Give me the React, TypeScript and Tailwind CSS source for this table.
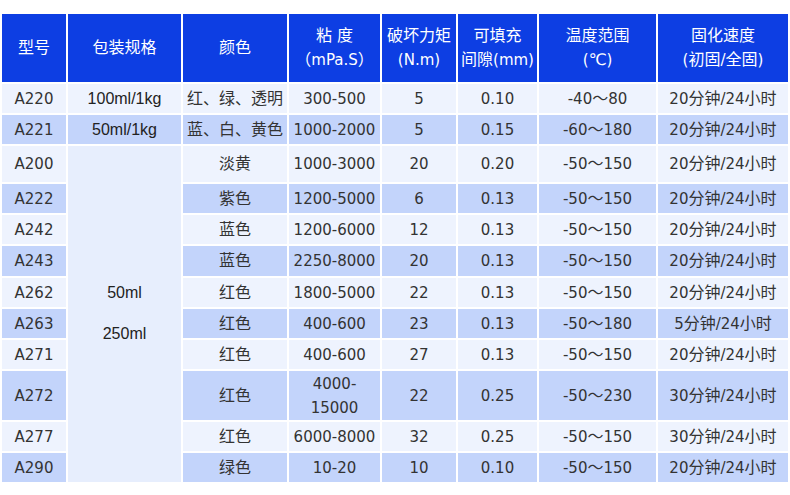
import { Fragment } from 'react';

// Han characters render a touch larger than the latin digits in the source table
const CJK = /([\u2000-\u206f\u2100-\u214f\u3000-\u9fff\uff00-\uffef]+)/;

const T = ({ text }: { text: string }) => (
  <>
    {text.split(CJK).map((part, i) =>
      i % 2 === 1 ? (
        <span key={i} className="text-[16px]">{part}</span>
      ) : (
        <Fragment key={i}>{part}</Fragment>
      )
    )}
  </>
);

type Row = {
  model: string;
  pack?: string;
  color: string;
  viscosity: string;
  torque: string;
  gap: string;
  temp: string;
  cure: string;
  h: string;
};

const rows: Row[] = [
  { model: 'A220', pack: '100ml/1kg', color: '红、绿、透明', viscosity: '300-500', torque: '5', gap: '0.10', temp: '-40～80', cure: '20分钟/24小时', h: 'h-[29px]' },
  { model: 'A221', pack: '50ml/1kg', color: '蓝、白、黄色', viscosity: '1000-2000', torque: '5', gap: '0.15', temp: '-60～180', cure: '20分钟/24小时', h: 'h-[29px]' },
  { model: 'A200', color: '淡黄', viscosity: '1000-3000', torque: '20', gap: '0.20', temp: '-50～150', cure: '20分钟/24小时', h: 'h-[36px]' },
  { model: 'A222', color: '紫色', viscosity: '1200-5000', torque: '6', gap: '0.13', temp: '-50～150', cure: '20分钟/24小时', h: 'h-[29px]' },
  { model: 'A242', color: '蓝色', viscosity: '1200-6000', torque: '12', gap: '0.13', temp: '-50～150', cure: '20分钟/24小时', h: 'h-[29px]' },
  { model: 'A243', color: '蓝色', viscosity: '2250-8000', torque: '20', gap: '0.13', temp: '-50～150', cure: '20分钟/24小时', h: 'h-[30px]' },
  { model: 'A262', color: '红色', viscosity: '1800-5000', torque: '22', gap: '0.13', temp: '-50～150', cure: '20分钟/24小时', h: 'h-[29px]' },
  { model: 'A263', color: '红色', viscosity: '400-600', torque: '23', gap: '0.13', temp: '-50～180', cure: '5分钟/24小时', h: 'h-[29px]' },
  { model: 'A271', color: '红色', viscosity: '400-600', torque: '27', gap: '0.13', temp: '-50～150', cure: '20分钟/24小时', h: 'h-[29px]' },
  { model: 'A272', color: '红色', viscosity: '4000-|15000', torque: '22', gap: '0.25', temp: '-50～230', cure: '30分钟/24小时', h: 'h-[49px]' },
  { model: 'A277', color: '红色', viscosity: '6000-8000', torque: '32', gap: '0.25', temp: '-50～150', cure: '30分钟/24小时', h: 'h-[29px]' },
  { model: 'A290', color: '绿色', viscosity: '10-20', torque: '10', gap: '0.10', temp: '-50～150', cure: '20分钟/24小时', h: 'h-[29px]' },
];

const headers = [
  ['型号'],
  ['包装规格'],
  ['颜色'],
  ['粘 度', '（mPa.S）'],
  ['破坏力矩', '(N.m)'],
  ['可填充', '间隙(mm)'],
  ['温度范围', '(℃)'],
  ['固化速度', '(初固/全固)'],
];

const widths = ['w-[64px]', 'w-[113px]', 'w-[104px]', 'w-[91px]', 'w-[74px]', 'w-[79px]', 'w-[117px]', 'w-[130px]'];

export default function App() {
  return (
    <div className="w-[790px] h-[495px] bg-white pt-[12px] font-['DejaVu_Sans','Noto_Sans_CJK_SC',sans-serif] text-[15px] leading-6 text-[#333]">
      <table className="table-fixed w-[790px] border-separate border-spacing-[2px]">
        <colgroup>
          {widths.map((w, i) => (
            <col key={i} className={w} />
          ))}
        </colgroup>
        <thead>
          <tr className="h-[68px]">
            {headers.map((lines, i) => (
              <th key={i} className="p-0 bg-[#0d3ee3] text-white font-normal text-center align-middle">
                {lines.map((l, j) => (
                  <div key={j} className="whitespace-nowrap">
                    <T text={l} />
                  </div>
                ))}
              </th>
            ))}
          </tr>
        </thead>
        <tbody>
          {rows.map((r, i) => {
            const bg = i % 2 === 0 ? 'bg-[#eef3fe]' : 'bg-[#c3d4fb]';
            const cell = `p-0 text-center align-middle whitespace-nowrap ${bg}`;
            return (
              <tr key={r.model} className={r.h}>
                <td className={cell}>{r.model}</td>
                {r.pack ? (
                  <td className={`${cell} font-['Liberation_Sans',sans-serif] text-[16px] text-[#222]`}>{r.pack}</td>
                ) : r.model === 'A200' ? (
                  <td
                    rowSpan={10}
                    className="p-0 text-center align-middle bg-[#e7eefd] font-['Liberation_Sans',sans-serif] text-[16px] leading-[20.5px] text-[#222]"
                  >
                    50ml
                    <br />
                    <br />
                    250ml
                  </td>
                ) : null}
                <td className={cell}>
                  <T text={r.color} />
                </td>
                <td className={cell}>
                  {r.viscosity.split('|').map((v, j) => (
                    <div key={j}>{v}</div>
                  ))}
                </td>
                <td className={cell}>{r.torque}</td>
                <td className={cell}>{r.gap}</td>
                <td className={cell}>
                  <T text={r.temp} />
                </td>
                <td className={cell}>
                  <T text={r.cure} />
                </td>
              </tr>
            );
          })}
        </tbody>
      </table>
    </div>
  );
}
